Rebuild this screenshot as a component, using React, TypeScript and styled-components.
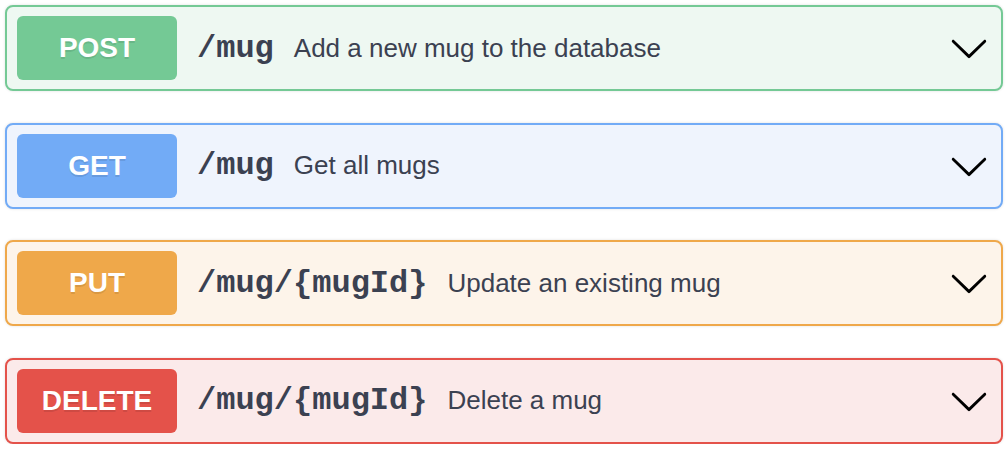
import styled, { createGlobalStyle } from "styled-components";

const GlobalStyle = createGlobalStyle`
  body {
    margin: 0;
    background: #ffffff;
  }
`;

type Method = "POST" | "GET" | "PUT" | "DELETE";

const palette: Record<Method, { main: string; bg: string }> = {
  POST: { main: "#74c995", bg: "#eef8f2" },
  GET: { main: "#72abf6", bg: "#eff4fd" },
  PUT: { main: "#efa84a", bg: "#fdf4ea" },
  DELETE: { main: "#e4524a", bg: "#fbeaea" },
};

const List = styled.div`
  display: flex;
  flex-direction: column;
  gap: 31.67px;
  padding: 5px 5px 0 5px;
`;

const Block = styled.div<{ $method: Method }>`
  display: flex;
  align-items: center;
  height: 86px;
  box-sizing: border-box;
  padding: 0 12px 0 10px;
  border: 2px solid ${(p) => palette[p.$method].main};
  background: ${(p) => palette[p.$method].bg};
  border-radius: 8px;
  box-shadow: 0 0 3px rgba(0, 0, 0, 0.12);
`;

const Badge = styled.span<{ $method: Method }>`
  display: flex;
  align-items: center;
  justify-content: center;
  width: 160px;
  height: 64px;
  flex-shrink: 0;
  border-radius: 6px;
  background: ${(p) => palette[p.$method].main};
  color: #ffffff;
  font-family: "Liberation Sans", Arial, sans-serif;
  font-weight: 700;
  font-size: 28px;
  text-shadow: 0 2px 0 rgba(0, 0, 0, 0.1);
`;

const Path = styled.span`
  padding: 0 20px;
  font-family: "Liberation Mono", "Courier New", monospace;
  font-weight: 700;
  font-size: 32px;
  color: #3b4151;
`;

const Description = styled.span`
  flex: 1;
  font-family: "Liberation Sans", Arial, sans-serif;
  font-size: 26px;
  color: #3b4151;
`;

const Arrow = styled.svg`
  width: 40px;
  height: 40px;
  flex-shrink: 0;
  fill: #000000;
`;

const Chevron = () => (
  <Arrow viewBox="0 0 20 20">
    <path d="M17.418 6.109c.272-.268.709-.268.979 0s.271.701 0 .969l-7.908 7.83c-.27.268-.707.268-.979 0l-7.908-7.83c-.27-.268-.27-.701 0-.969.271-.268.709-.268.979 0L10 13.25l7.418-7.141z" />
  </Arrow>
);

const operations: { method: Method; path: string; summary: string }[] = [
  { method: "POST", path: "/mug", summary: "Add a new mug to the database" },
  { method: "GET", path: "/mug", summary: "Get all mugs" },
  { method: "PUT", path: "/mug/{mugId}", summary: "Update an existing mug" },
  { method: "DELETE", path: "/mug/{mugId}", summary: "Delete a mug" },
];

const App = () => (
  <>
    <GlobalStyle />
    <List>
      {operations.map((op) => (
        <Block key={op.method} $method={op.method}>
          <Badge $method={op.method}>{op.method}</Badge>
          <Path>{op.path}</Path>
          <Description>{op.summary}</Description>
          <Chevron />
        </Block>
      ))}
    </List>
  </>
);

export default App;
